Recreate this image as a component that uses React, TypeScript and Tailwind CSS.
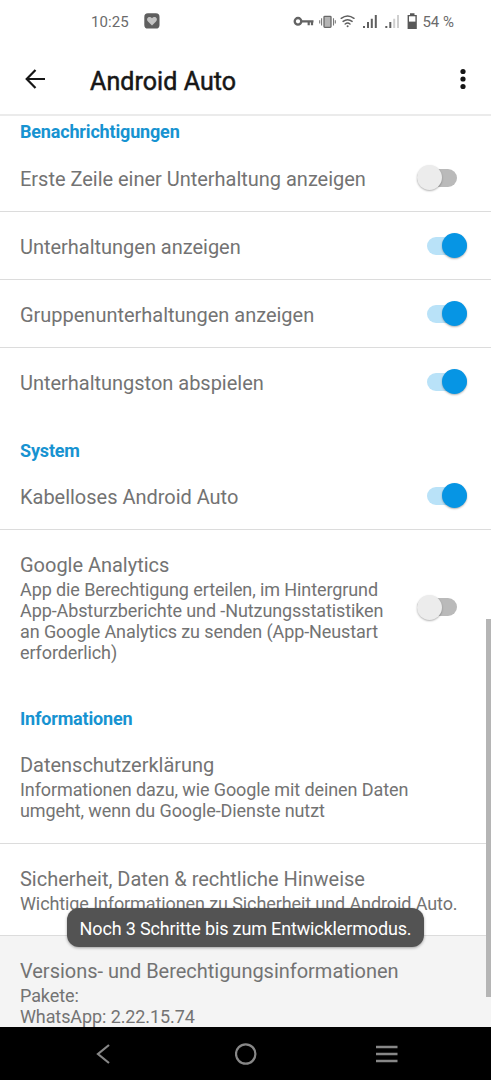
import type { ReactNode } from "react";

function StatusBar() {
  return (
    <div className="flex h-[43px] shrink-0 items-center pl-[91px] pr-[37px] text-[#6b6b6b]">
      <span className="text-[15px] leading-[18px] tracking-[0.1px]">10:25</span>
      <svg className="ml-[15px] -mt-[1px]" width="16" height="16" viewBox="0 0 16 16">
        <rect x="0.3" y="0.3" width="15.2" height="15.2" rx="3.6" fill="#5f5f5f" />
        <path
          d="M8 12.400 4 8.500C2.200 6.500 3.300 3.900 5.500 3.900 6.700 3.900 7.500 4.500 8 5.300 8.500 4.500 9.300 3.900 10.500 3.900c2.200 0 3.300 2.600 1.500 4.600Z"
          fill="#c4c4c4"
        />
      </svg>
      <div className="ml-auto flex items-center">
        <svg width="124" height="20" viewBox="293 11 124 20" fill="none">
          <circle cx="298" cy="20.300" r="3.300" stroke="#636363" strokeWidth="2.300" />
          <path d="M301.300 20.300H313.500M308.700 20.300V24.200M312 20.300V24.200" stroke="#636363" strokeWidth="2.200" />
          <rect x="324" y="15.300" width="7" height="11" rx="0.800" fill="#b4b4b4" stroke="#686868" strokeWidth="1.300" />
          <path d="M321.600 17.300V24.400M333.500 17.300V24.400M319.700 19.200V22.500M335.300 19.200V22.500" stroke="#777" strokeWidth="1.100" />
          <path
            d="M341.200 17.300Q347.600 12.600 354 17.300M343.100 20.400Q347.600 17 352.100 20.400M345.200 23Q347.600 21.200 350 23"
            stroke="#5f5f5f"
            strokeWidth="1.500"
            strokeLinecap="round"
          />
          <circle cx="347.600" cy="25.300" r="1" fill="#5f5f5f" />
          <path d="M364 25V27M368 21V27M371.800 17.700V27M375.800 14V27" stroke="#5f5f5f" strokeWidth="2" />
          <path d="M386.300 25V27M390.300 21V27" stroke="#5f5f5f" strokeWidth="2" />
          <path d="M394.200 17.700V27M398 14V27" stroke="#cfcfcf" strokeWidth="2" />
          <path d="M410 12.300h4.500v1.600h2.300v14h-9.200v-14h2.400Z" fill="#585858" />
          <rect x="409" y="15.300" width="6.400" height="5.300" fill="#fff" />
        </svg>
        <span className="ml-[5px] whitespace-nowrap text-[15px] leading-[18px]">54 %</span>
      </div>
    </div>
  );
}

function Toolbar() {
  return (
    <header className="flex h-[73px] shrink-0 items-center border-b-2 border-[#ebebeb] pl-[25px] pr-[24px]">
      <svg className="mt-[1px]" width="21" height="20" viewBox="0 0 21 20" fill="none" stroke="#171717" strokeWidth="2.200">
        <path d="M20 10H2M10.500 1 1.700 10l8.800 9" />
      </svg>
      <h1 className="ml-[44px] mt-[6px] whitespace-nowrap text-[25px] font-normal leading-[30px] tracking-[0.08px] text-[#171717] [-webkit-text-stroke:0.5px_#171717]">
        Android Auto
      </h1>
      <svg className="ml-auto mt-[1px]" width="8" height="22" viewBox="0 0 8 22" fill="#151515">
        <circle cx="4" cy="3.500" r="2.600" />
        <circle cx="4" cy="11" r="2.600" />
        <circle cx="4" cy="18.500" r="2.600" />
      </svg>
    </header>
  );
}

function Switch({ on = false }: { on?: boolean }) {
  return (
    <div
      role="switch"
      aria-checked={on}
      className={
        on
          ? "mr-[24px] flex h-[18px] w-[40px] shrink-0 items-center justify-end rounded-full bg-[#b9e2f8]"
          : "mr-[34px] flex h-[18px] w-[40px] shrink-0 items-center rounded-full bg-[#bababa]"
      }
    >
      <span
        className={
          on
            ? "size-[25px] shrink-0 rounded-full bg-[#0695e4] shadow-[0_1px_2px_rgba(0,0,0,0.3)]"
            : "size-[25px] shrink-0 rounded-full bg-[#ececec] shadow-[0_1px_2px_rgba(0,0,0,0.3)]"
        }
      />
    </div>
  );
}

function SectionTitle({ children }: { children: ReactNode }) {
  return (
    <h2 className="flex h-[46px] shrink-0 items-end pl-5 text-[18px] font-bold leading-[22px] tracking-[-0.17px] text-[#1793d1]">
      {children}
    </h2>
  );
}

function SwitchRow({ label, on, divider = true }: { label: string; on?: boolean; divider?: boolean }) {
  return (
    <div
      className={
        divider
          ? "flex h-[68px] shrink-0 items-center justify-between border-b border-[#dcdcdc] pl-5"
          : "flex h-[68px] shrink-0 items-center justify-between border-b border-transparent pl-5"
      }
    >
      <span className="mt-[3px] whitespace-nowrap text-[20px] leading-6 tracking-[-0.02px]">{label}</span>
      <Switch on={on} />
    </div>
  );
}

function Details({ title, lines }: { title: string; lines: string[] }) {
  return (
    <div className="whitespace-nowrap pl-5 pt-[23px]">
      <div className="text-[20px] leading-6 tracking-[-0.02px]">{title}</div>
      <div className="mt-[2px] text-[18px] leading-[21px] tracking-[-0.1px]">
        {lines.map((line) => (
          <div key={line}>{line}</div>
        ))}
      </div>
    </div>
  );
}

function NavigationBar() {
  return (
    <nav className="flex h-[53px] shrink-0 items-center bg-black pl-[96px] pr-[93px]">
      <svg width="14" height="20" viewBox="0 0 14 20" fill="none" stroke="#878787" strokeWidth="2.200">
        <path d="M13 1 2 10l11 9" />
      </svg>
      <svg className="ml-[125px]" width="22" height="22" viewBox="0 0 22 22" fill="none" stroke="#878787" strokeWidth="2.200">
        <circle cx="10.700" cy="11" r="9.700" />
      </svg>
      <svg className="ml-auto" width="22" height="18" viewBox="0 0 22 18" fill="none" stroke="#878787" strokeWidth="2.400">
        <path d="M0 2h21.500M0 9h21.500M0 16h21.500" />
      </svg>
    </nav>
  );
}

export default function App() {
  return (
    <div className="relative flex h-[1080px] w-[491px] flex-col overflow-hidden bg-white font-[Roboto,sans-serif] text-[#737373]">
      <StatusBar />
      <Toolbar />
      <main className="flex min-h-0 flex-1 flex-col overflow-hidden">
        <h2 className="h-[28px] shrink-0 pl-5 pt-[5px] text-[18px] font-bold leading-[22px] tracking-[-0.17px] text-[#1793d1]">
          Benachrichtigungen
        </h2>
        <SwitchRow label="Erste Zeile einer Unterhaltung anzeigen" />
        <SwitchRow label="Unterhaltungen anzeigen" on />
        <SwitchRow label="Gruppenunterhaltungen anzeigen" on />
        <SwitchRow label="Unterhaltungston abspielen" on divider={false} />
        <SectionTitle>System</SectionTitle>
        <SwitchRow label="Kabelloses Android Auto" on />
        <div className="flex h-[154px] shrink-0 items-center justify-between">
          <div className="self-start">
            <Details
              title="Google Analytics"
              lines={[
                "App die Berechtigung erteilen, im Hintergrund",
                "App-Absturzberichte und -Nutzungsstatistiken",
                "an Google Analytics zu senden (App-Neustart",
                "erforderlich)",
              ]}
            />
          </div>
          <Switch />
        </div>
        <SectionTitle>Informationen</SectionTitle>
        <div className="h-[114px] shrink-0 border-b border-[#dcdcdc]">
          <Details
            title="Datenschutzerklärung"
            lines={["Informationen dazu, wie Google mit deinen Daten", "umgeht, wenn du Google-Dienste nutzt"]}
          />
        </div>
        <div className="h-[92px] shrink-0 border-b border-[#dcdcdc]">
          <Details
            title="Sicherheit, Daten & rechtliche Hinweise"
            lines={["Wichtige Informationen zu Sicherheit und Android Auto."]}
          />
        </div>
        <div className="h-[91px] shrink-0 bg-[#f4f4f4]">
          <Details title="Versions- und Berechtigungsinformationen" lines={["Pakete:", "WhatsApp: 2.22.15.74"]} />
        </div>
      </main>
      <NavigationBar />
      <div className="absolute right-0 top-[619px] h-[378px] w-[5px] bg-[#b5b5b5]" />
      <div className="absolute left-[67px] top-[908px] flex h-[39px] w-[357px] items-center justify-center whitespace-nowrap rounded-[12px] bg-[#535353] pt-[3px] text-[18px] leading-[22px] tracking-[-0.15px] text-white shadow-[0_1px_3px_rgba(0,0,0,0.35)]">
        Noch 3 Schritte bis zum Entwicklermodus.
      </div>
    </div>
  );
}
